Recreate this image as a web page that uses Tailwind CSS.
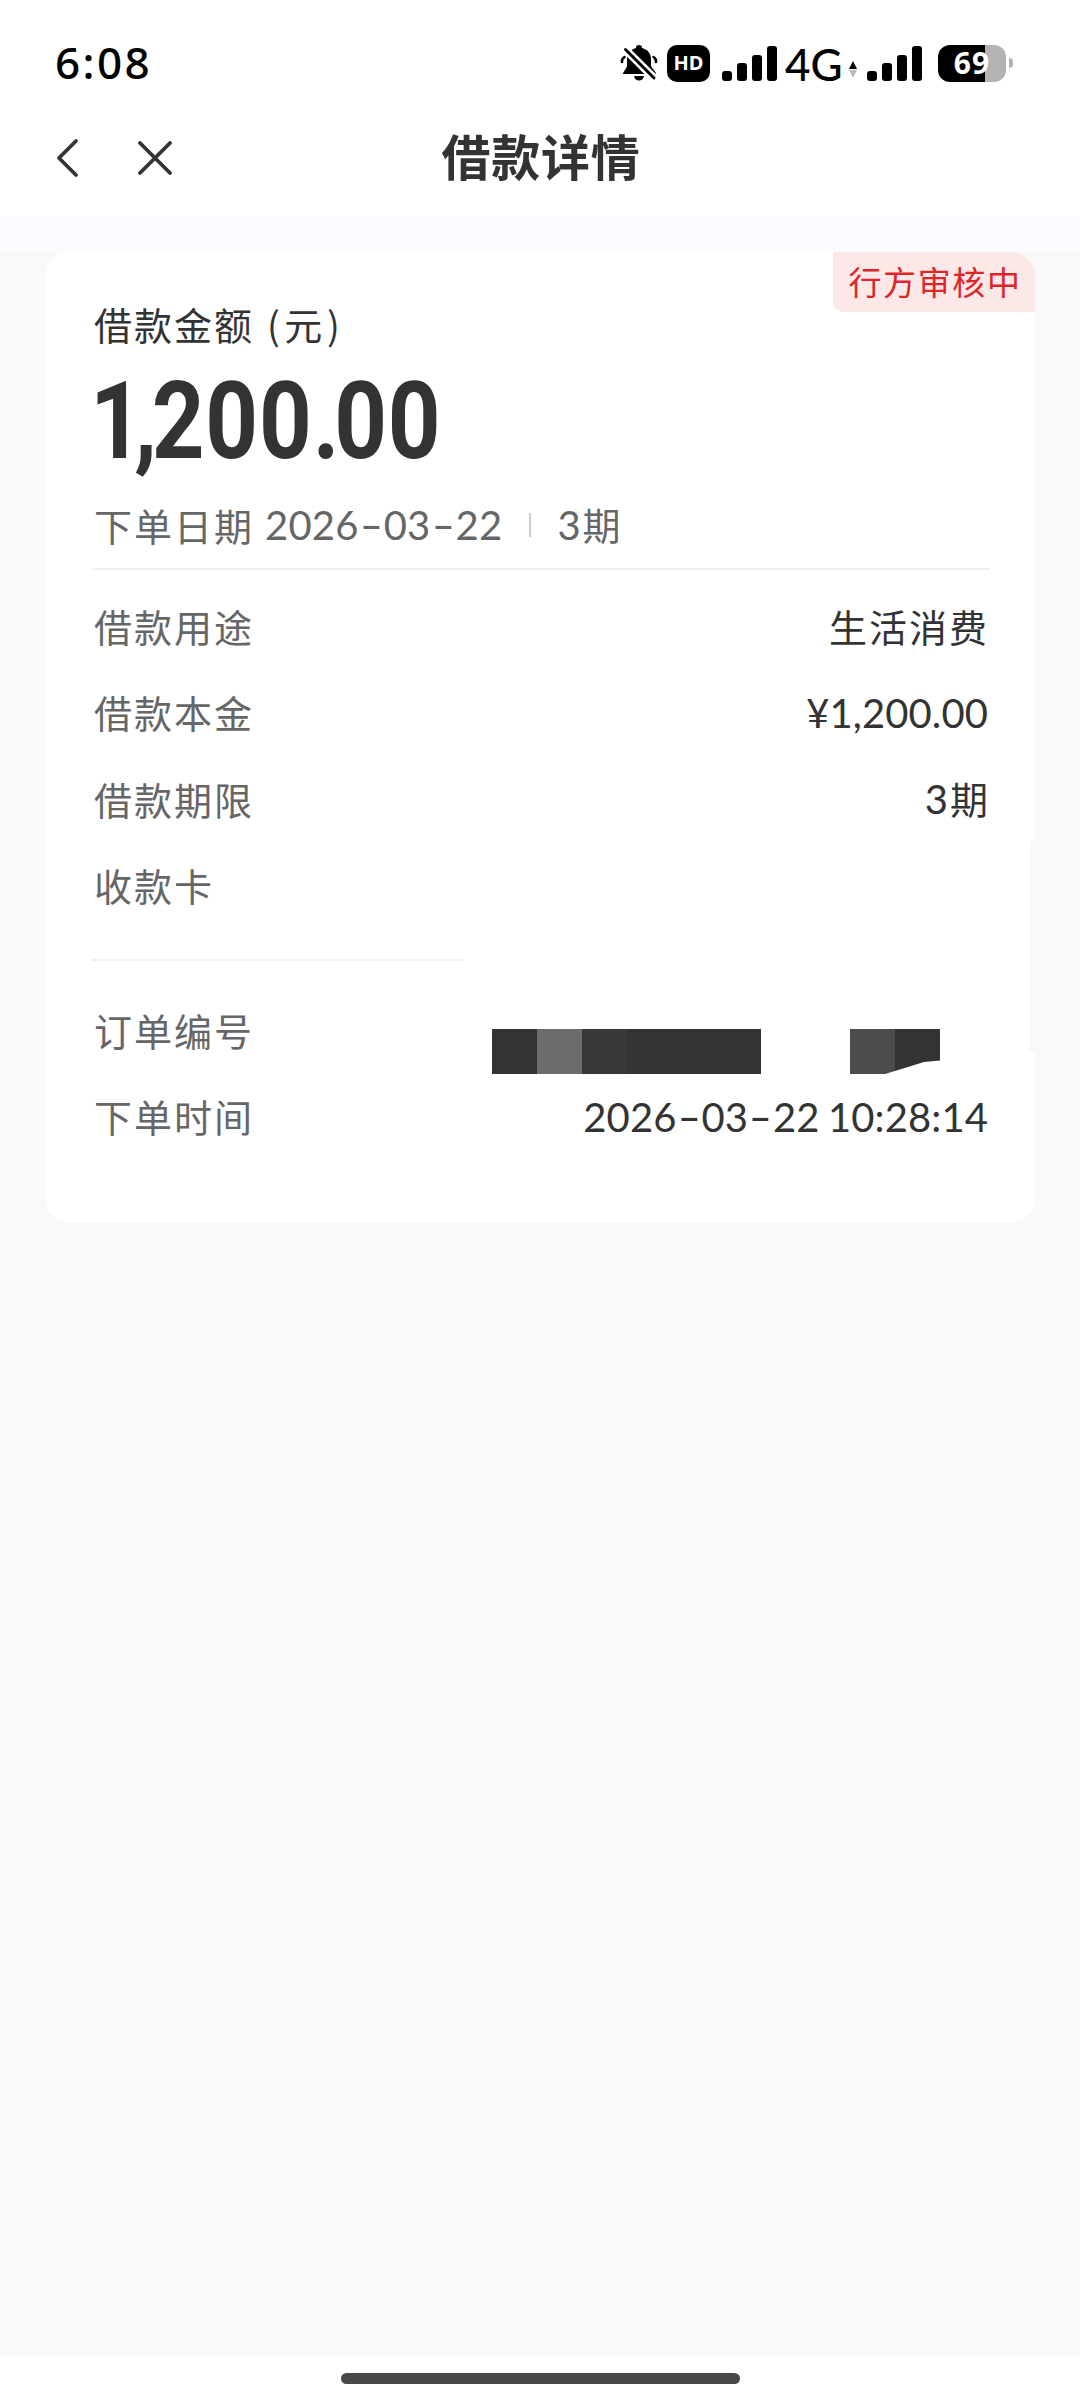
<!DOCTYPE html>
<html lang="zh-CN">
<head>
<meta charset="utf-8">
<title>借款详情</title>
<script src="https://cdn.jsdelivr.net/npm/@tailwindcss/browser@4"></script>
</head>
<body class="w-[1080px] h-[2400px] overflow-hidden bg-[#f9f9f9] flex flex-col text-[#333] font-['Noto_Sans_CJK_SC',sans-serif]">
<header class="h-[217px] bg-white flex flex-col shrink-0">
  <div class="h-[126px] pl-[55px] pr-[67px] flex items-center justify-between text-black font-['Noto_Sans',sans-serif]">
    <span class="-mt-[2px] text-[44px] leading-none font-medium tracking-[2.400px]">6:08</span>
    <div class="flex items-center">
      <svg class="w-[38px] h-[38px]" viewBox="0 0 38 38">
        <path d="M16 4a3 3 0 0 1 6 0c6 1.500 9 6 9 11v6c0 3 5 6 5 9H3c0-3 4-5 4-9v-6c0-5 3-9.500 9-11z"/>
        <path d="M14 32h10c-1 6-9 6-10 0z"/>
        <path d="M4.500 13q-3 2-2.500 5M33.500 13q3 2 2.500 5" fill="none" stroke="#000" stroke-width="2.600" stroke-linecap="round"/>
        <path d="M3 3L36 36" stroke="#fff" stroke-width="8"/>
        <path d="M5.500 5.500L34 34" stroke="#000" stroke-width="3" stroke-linecap="round"/>
      </svg>
      <span class="ml-[9px] w-[43px] h-[37px] rounded-[10px] bg-black text-white text-[20px] leading-none font-bold flex items-center justify-center">HD</span>
      <svg class="ml-[12px] w-[55px] h-[35px]" viewBox="0 0 55 35"><rect x="0" y="25" width="10" height="10" rx="3"/><rect x="15" y="17" width="10" height="18" rx="3"/><rect x="30" y="9" width="10" height="26" rx="3"/><rect x="45" y="0" width="10" height="35" rx="3"/></svg>
      <span class="ml-[8px] mt-[2px] w-[62px] text-[44px] leading-none font-medium font-['Lato'] whitespace-nowrap">4G</span>
      <svg class="ml-[2px] mt-[12px] w-[8px] h-[17px]" viewBox="0 0 8 17"><path d="M4 0L8 8H0z"/><path d="M4 17L8 9H0z" fill="#bbb"/></svg>
      <svg class="ml-[10px] w-[55px] h-[35px]" viewBox="0 0 55 35"><rect x="0" y="25" width="10" height="10" rx="3"/><rect x="15" y="17" width="10" height="18" rx="3"/><rect x="30" y="9" width="10" height="26" rx="3"/><rect x="45" y="0" width="10" height="35" rx="3"/></svg>
      <span class="ml-[16px] w-[68px] h-[37px] rounded-[12px] bg-linear-to-r from-black from-[69%] to-[#b3b3b3] to-[69%] text-white text-[30px] leading-none font-bold flex items-center justify-center tracking-[1px]">69</span>
      <span class="ml-[3px] w-[4px] h-[10px] rounded-r-full bg-[#b3b3b3]"></span>
    </div>
  </div>
  <div class="h-[63px] grid grid-cols-3 items-center">
    <div class="pl-[56px] flex items-center gap-[59px]">
      <svg class="w-[23px] h-[40px]" viewBox="0 0 23 40" fill="none" stroke="#333" stroke-width="3.800" stroke-linecap="round" stroke-linejoin="round"><path d="M20 3L3 20L20 37"/></svg>
      <svg class="w-[34px] h-[34px]" viewBox="0 0 34 34" fill="none" stroke="#333" stroke-width="3.800" stroke-linecap="round"><path d="M2 2L32 32M32 2L2 32"/></svg>
    </div>
    <h1 class="-mt-[7px] pl-[2px] text-center text-[49px] leading-none font-bold tracking-[0.800px]">借款详情</h1>
  </div>
</header>
<div class="h-[35px] bg-[#fafbff] shrink-0"></div>
<main class="grow">
  <section class="relative ml-[46px] w-[989px] h-[970px] bg-white rounded-[23px] pl-[46px] pr-[45px] flex flex-col overflow-hidden">
    <span class="absolute top-0 right-0 w-[202px] h-[60px] bg-[#fde8e8] rounded-bl-[10px] rounded-tr-[23px] text-[#dd262a] text-[33px] leading-none tracking-[1.600px] flex items-center justify-center whitespace-nowrap pl-[2px] pb-px">行方审核中</span>
    <span class="absolute right-0 top-[590px] w-[6px] h-[211px] bg-[#f9f9f9]"></span>
    <p class="mt-[52px] ml-[2px] text-[38px] leading-[40px] tracking-[2px]">借款金额<span class="tracking-[4.500px]"> (元</span>)</p>
    <p class="mt-[24px] -ml-[2px] h-[107px] text-[107px] leading-[107px] font-bold font-['Roboto'] origin-left scale-x-[0.86] tracking-[1px] whitespace-nowrap"><span class="tracking-[-10px]">1</span><span class="tracking-[-6px]">,</span>200<span class="tracking-[-6px]">.</span>00</p>
    <div class="mt-[30px] ml-[2px] h-[40px] flex items-center text-[#666] text-[38px] leading-none tracking-[2px] whitespace-nowrap">
      <span class="-mt-px">下单日期</span>
      <span class="ml-[11px] font-['Lato'] text-[40px] tracking-[0.200px]">2026<span class="inline-block scale-x-160 px-[5px]">-</span>03<span class="inline-block scale-x-160 px-[5px]">-</span>22</span>
      <span class="ml-[27px] w-[2px] h-[24px] bg-[#ccc]"></span>
      <span class="ml-[26px] -mt-px"><span class="font-['Lato'] text-[40px]">3</span>期</span>
    </div>
    <div class="mt-[23px] h-[2px] bg-[#f1f1f1] shrink-0"></div>
    <dl class="mt-[13px] pl-[2px] text-[38px] leading-none tracking-[2px] whitespace-nowrap">
      <div class="h-[86px] flex items-center justify-between"><dt class="text-[#666]">借款用途</dt><dd class="pr-[1px]">生活消费</dd></div>
      <div class="h-[86px] flex items-center justify-between"><dt class="text-[#666]">借款本金</dt><dd class="pr-[2px] pt-px font-['Lato'] text-[40px] tracking-[0.100px]">¥1,200.00</dd></div>
      <div class="h-[87px] flex items-center justify-between"><dt class="text-[#666]">借款期限</dt><dd><span class="font-['Lato'] text-[40px]">3</span>期</dd></div>
      <div class="h-[86px] flex items-center justify-between"><dt class="text-[#666]">收款卡</dt><dd></dd></div>
    </dl>
    <div class="mt-[31px] w-[372px] h-[2px] bg-[#f1f1f1] shrink-0"></div>
    <dl class="mt-[26px] pl-[2px] text-[38px] leading-none tracking-[2px] whitespace-nowrap">
      <div class="h-[86px] flex items-center justify-between"><dt class="text-[#666]">订单编号</dt>
        <dd class="mr-[50px] mt-[43px] flex">
          <svg class="w-[448px] h-[45px]" viewBox="0 0 448 45"><path d="M0 0h269v45H0z" fill="#333"/><path d="M45 0h45v45H45z" fill="#6c6c6c"/><path d="M90 0h45v45H90z" fill="#383838"/><path d="M358 0h45v42L393 45H358z" fill="#4c4c4c"/><path d="M403 0h45v31.500L432 33L403 42z" fill="#333"/></svg>
        </dd></div>
      <div class="h-[86px] flex items-center justify-between"><dt class="text-[#666]">下单时间</dt><dd class="pt-[2px] pr-[2px] font-['Lato'] text-[40px] tracking-[0.100px]">2026<span class="inline-block scale-x-160 px-[5px]">-</span>03<span class="inline-block scale-x-160 px-[5px]">-</span>22 <span class="-ml-[2px]">10:28:14</span></dd></div>
    </dl>
  </section>
</main>
<footer class="h-[44px] bg-white flex justify-center items-start pt-[17px] shrink-0"><span class="w-[399px] h-[11px] rounded-full bg-[#484848]"></span></footer>
</body>
</html>
